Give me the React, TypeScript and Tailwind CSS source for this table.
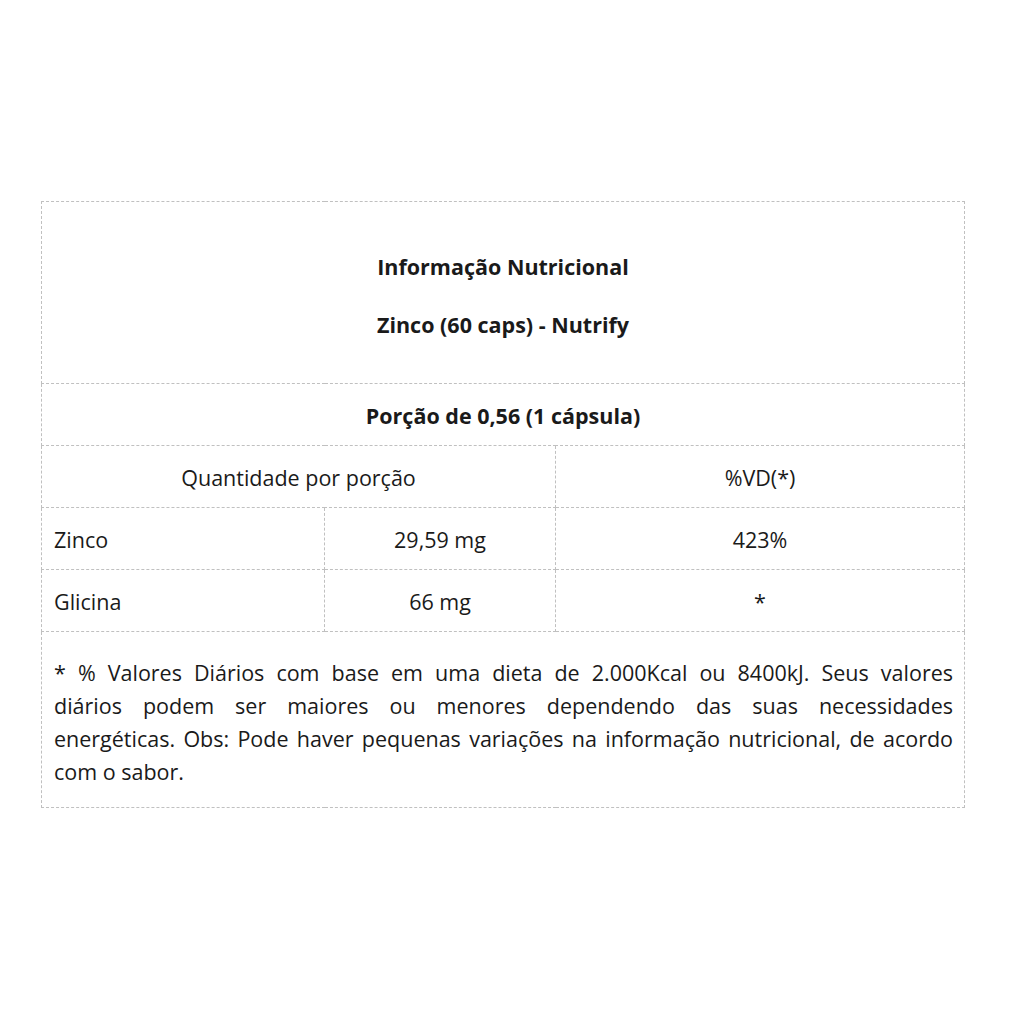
import React from "react";

export default function App() {
  const b = "border border-dashed border-[#c0c0c0]";
  const j = "text-justify [text-align-last:justify] leading-[33px] whitespace-nowrap";
  return (
    <div
      className="w-[1017px] h-[1024px] bg-white text-[#1a1a1a] pt-[201px] pl-[41px]"
      style={{ fontFamily: '"Open Sans", "Noto Sans", sans-serif' }}
    >
      <table className="w-[923px] border-collapse table-fixed text-[21.5px]">
        <colgroup>
          <col className="w-[283px]" />
          <col className="w-[231px]" />
          <col className="w-[409px]" />
        </colgroup>
        <tbody>
          <tr>
            <td colSpan={3} className={`${b} h-[182px] text-center font-bold p-0`}>
              <div className="flex flex-col items-center gap-[29px] pt-[6px]">
                <div className="leading-[29px]">Informação Nutricional</div>
                <div className="leading-[29px]">Zinco (60 caps) - Nutrify</div>
              </div>
            </td>
          </tr>
          <tr>
            <td colSpan={3} className={`${b} h-[62px] text-center font-bold p-0 pt-[4px]`}>
              Porção de 0,56 (1 cápsula)
            </td>
          </tr>
          <tr>
            <td colSpan={2} className={`${b} h-[62px] text-center p-0 pt-[4px]`}>
              Quantidade por porção
            </td>
            <td className={`${b} h-[62px] text-center p-0 pt-[4px]`}>%VD(*)</td>
          </tr>
          <tr>
            <td className={`${b} h-[62px] pl-[12px] pt-[4px]`}>Zinco</td>
            <td className={`${b} h-[62px] text-center p-0 pt-[4px]`}>29,59 mg</td>
            <td className={`${b} h-[62px] text-center p-0 pt-[4px]`}>423%</td>
          </tr>
          <tr>
            <td className={`${b} h-[62px] pl-[12px] pt-[4px]`}>Glicina</td>
            <td className={`${b} h-[62px] text-center p-0 pt-[4px]`}>66 mg</td>
            <td className={`${b} h-[62px] text-center p-0 pt-[4px]`}>*</td>
          </tr>
          <tr>
            <td colSpan={3} className={`${b} h-[175px] pl-[12px] pr-[11px] pt-[24px] pb-[19px] align-top`}>
              <div className={j}>
                * % Valores Diários com base em uma dieta de 2.000Kcal ou 8400kJ. Seus valores
              </div>
              <div className={j}>
                diários podem ser maiores ou menores dependendo das suas necessidades
              </div>
              <div className={j}>
                energéticas. Obs: Pode haver pequenas variações na informação nutricional, de acordo
              </div>
              <div className="leading-[33px]">com o sabor.</div>
            </td>
          </tr>
        </tbody>
      </table>
    </div>
  );
}
